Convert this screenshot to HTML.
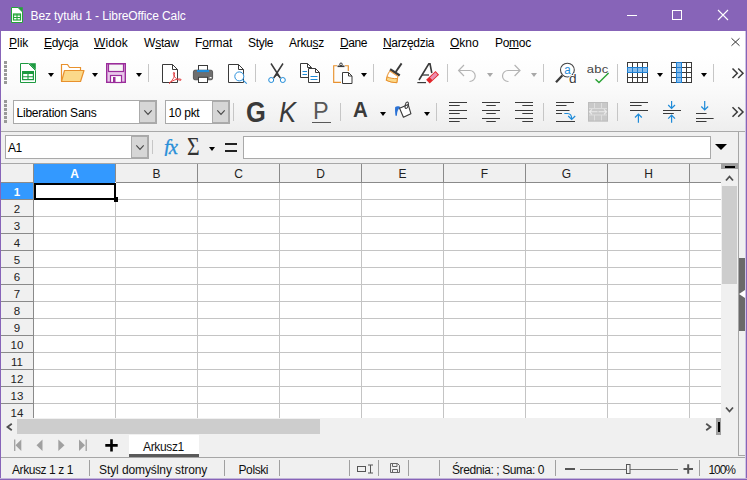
<!DOCTYPE html>
<html lang="pl">
<head>
<meta charset="utf-8">
<title>Bez tytułu 1 - LibreOffice Calc</title>
<style>
html,body{margin:0;padding:0;}
body{width:747px;height:480px;overflow:hidden;position:relative;background:#f0f0f0;font-family:"Liberation Sans",sans-serif;font-size:12px;color:#000;}
#win{position:absolute;left:0;top:0;width:747px;height:480px;background:#f0f0f0;overflow:hidden;}
#win div,#win span,#win svg{position:absolute;}
#title{left:0;top:0;width:747px;height:31px;background:#8764b8;color:#fff;}
#title .t{left:30.5px;top:9px;font-size:12px;line-height:15px;white-space:nowrap;letter-spacing:-0.11px;}
#menu{left:1px;top:31px;width:744px;height:24px;background:#fff;}
#menu span{top:5px;line-height:14px;font-size:12px;white-space:nowrap;color:#000;}
#menu u{text-decoration:underline;text-underline-offset:1px;}
#tb{left:1px;top:55px;width:744px;height:76px;background:linear-gradient(#ffffff 0,#fbfbfb 30px,#f3f3f3 60px,#eeeeee 76px);}
#fbar{left:1px;top:131px;width:744px;height:32px;background:#f0f0f0;border-top:1px solid #a9a9a9;box-sizing:border-box;}
.sep{width:1px;background:#c6c6c6;}
.arr{width:0;height:0;border-left:3.5px solid transparent;border-right:3.5px solid transparent;border-top:4px solid #000;}
.arr.dis{border-top-color:#a8a8a8;}
.grip{width:3px;background:repeating-linear-gradient(#999 0,#999 3px,transparent 3px,transparent 4px);}
.combo{box-sizing:border-box;border:1px solid #a9a9a9;background:#fff;}
.combo .tx{left:3px;top:5px;font-size:12px;line-height:14px;white-space:nowrap;}
.combo .btn{right:0;top:0;width:17px;bottom:0;background:#d6d6d6;border:1px solid #ababab;box-sizing:border-box;}
svg{overflow:visible;}
#grid{left:1px;top:163px;width:720px;height:255px;background:#fff;overflow:hidden;}
#grid .ch{top:1px;height:18px;line-height:20px;text-align:center;font-size:12px;color:#222;background:#f0f0f0;}
#grid .rh{left:0;width:32px;height:16px;line-height:18px;text-align:center;font-size:11.500px;overflow:hidden;color:#222;background:#f0f0f0;}
#stat{left:1px;top:457px;width:744px;height:22px;background:#f0f0f0;border-top:1px solid #a6a6a6;box-sizing:border-box;}
#stat span{top:4.8px;font-size:12px;line-height:14px;white-space:nowrap;color:#111;}
#stat .sep{top:2px;height:16px;background:#a0a0a0;}
</style>
</head>
<body>
<div id="win">
<div id="title">
<svg style="left:10px;top:7px" width="14" height="16" viewBox="0 0 14 16"><path d="M1.500 0.500H8L12.500 5V15.500H1.500Z" fill="#fff" stroke="#23a537" stroke-width="1"/><path d="M8.500 0.500H12.500V4.500Z" fill="#23a537" stroke="#23a537" stroke-width="0.500"/><rect x="3.500" y="7" width="7" height="6" fill="none" stroke="#23a537" stroke-width="1.200"/><path d="M3.500 8H10.500M3.500 10.500H10.500M7 7V13" stroke="#23a537" stroke-width="1.100"/></svg>
<div class="t">Bez tytułu 1 - LibreOffice Calc</div>
<svg style="left:620px;top:0" width="127" height="31" viewBox="0 0 127 31"><path d="M7 15.500H17" stroke="#fff" stroke-width="1"/><rect x="52.500" y="10.500" width="9" height="9" fill="none" stroke="#fff" stroke-width="1"/><path d="M98 10L108 20M108 10L98 20" stroke="#fff" stroke-width="1.100"/></svg>
</div>
<div id="menu">
<span style="left:8px;letter-spacing:0px"><u>P</u>lik</span>
<span style="left:43px;letter-spacing:-0.3px"><u>E</u>dycja</span>
<span style="left:93px;letter-spacing:0.1px"><u>W</u>idok</span>
<span style="left:143px;letter-spacing:-0.2px">W<u>s</u>taw</span>
<span style="left:194px;letter-spacing:-0.15px">F<u>o</u>rmat</span>
<span style="left:247px;letter-spacing:-0.3px">Style</span>
<span style="left:288px;letter-spacing:-0.3px">Arku<u>s</u>z</span>
<span style="left:339px;letter-spacing:-0.4px"><u>D</u>ane</span>
<span style="left:382px;letter-spacing:-0.33px"><u>N</u>arzędzia</span>
<span style="left:449px;letter-spacing:0px"><u>O</u>kno</span>
<span style="left:494px;letter-spacing:-0.3px">Po<u>m</u>oc</span>
<svg style="left:730px;top:7.400px" width="9" height="8" viewBox="0 0 9 8"><path d="M0.500 0.300L8.500 7.700M8.500 0.300L0.500 7.700" stroke="#333" stroke-width="1"/></svg>
</div>
<div id="tb">
<div class="grip" style="left:3px;top:6px;height:23px"></div>
<div class="grip" style="left:3px;top:45px;height:23px"></div>
<div class="sep" style="left:147px;top:9px;height:18px"></div>
<div class="sep" style="left:254px;top:9px;height:18px"></div>
<div class="sep" style="left:372px;top:9px;height:18px"></div>
<div class="sep" style="left:446px;top:9px;height:18px"></div>
<div class="sep" style="left:542px;top:9px;height:18px"></div>
<div class="sep" style="left:616px;top:9px;height:18px"></div>
<div class="sep" style="left:712px;top:9px;height:18px"></div>
<div class="sep" style="left:232px;top:48px;height:18px"></div>
<div class="sep" style="left:339px;top:48px;height:18px"></div>
<div class="sep" style="left:435px;top:48px;height:18px"></div>
<div class="sep" style="left:542px;top:48px;height:18px"></div>
<div class="sep" style="left:616px;top:48px;height:18px"></div>
<div class="arr" style="left:47px;top:18px"></div>
<div class="arr" style="left:91px;top:18px"></div>
<div class="arr" style="left:135px;top:18px"></div>
<div class="arr" style="left:360px;top:18px"></div>
<div class="arr dis" style="left:486px;top:18px"></div>
<div class="arr dis" style="left:530px;top:18px"></div>
<div class="arr" style="left:656px;top:18px"></div>
<div class="arr" style="left:700px;top:18px"></div>
<div class="arr" style="left:379px;top:57px"></div>
<div class="arr" style="left:423px;top:57px"></div>
<svg style="left:15px;top:6px" width="24" height="24" viewBox="16 61 24 24"><path d="M20.500 63.500H28.500L35.500 70.500V82.500H20.500Z" fill="#fff" stroke="#1d9a40"/><path d="M29.500 63.500H35.500V69.500Z" fill="#1d9a40" stroke="#1d9a40" stroke-width="0.600"/><rect x="22.600" y="71.600" width="10.800" height="8" fill="#fff" stroke="#1d9a40" stroke-width="1.200"/><rect x="22.600" y="71.600" width="10.800" height="2.400" fill="#1d9a40"/><path d="M22.600 76.800H33.400M28 73V79.600" stroke="#1d9a40" stroke-width="1.100"/></svg>
<svg style="left:59px;top:6px" width="26" height="24" viewBox="60 61 26 24"><path d="M61.500 81V64.500H67.500L69.500 67.500H80.500V71" fill="#fff" stroke="#e8912d" stroke-width="1.200"/><path d="M61.500 81.500L64.500 70.500H84L80.500 81.500Z" fill="#fbd98a" stroke="#e8912d" stroke-width="1.200" stroke-linejoin="round"/></svg>
<svg style="left:103px;top:6px" width="24" height="24" viewBox="104 61 24 24"><rect x="106.700" y="63.700" width="18.600" height="18.600" fill="#e8c7ea" stroke="#9b2d9b" stroke-width="1.400"/><rect x="108.500" y="64" width="15" height="7.500" fill="#f6f6f6" stroke="#9b2d9b" stroke-width="1.200"/><rect x="110.500" y="75.500" width="11" height="7" fill="#fff" stroke="#9b2d9b" stroke-width="1.200"/><rect x="113" y="77" width="2.500" height="5.500" fill="#9b2d9b"/></svg>
<svg style="left:159px;top:6px" width="24" height="24" viewBox="160 61 24 24"><path d="M162.500 64.500H172.500L177.500 69.500V82.500H162.500Z" fill="#fff" stroke="#3a3a3a"/><path d="M172.500 64.500V69.500H177.500" fill="none" stroke="#3a3a3a"/><path d="M169 83.500C172 81 175 77 174.500 73C174 71.500 173 72.500 173.500 74.500C174.500 78 178 80.500 181 80.200C182 79.500 180 78.500 177 79.200C174 80 171 81.500 169 83.500Z" fill="none" stroke="#e0393d" stroke-width="0.950" stroke-linejoin="round"/></svg>
<svg style="left:190px;top:6px" width="24" height="24" viewBox="191 61 24 24"><rect x="193.400" y="70.200" width="19.200" height="9.600" rx="1.600" fill="#6e6e6e" stroke="#444" stroke-width="0.800"/><rect x="198.500" y="65.500" width="9" height="4.800" fill="#fff" stroke="#3a3a3a"/><rect x="197" y="69.900" width="12" height="2.200" fill="#1e8bd9"/><rect x="198.500" y="77.300" width="9" height="5.200" fill="#fff" stroke="#3a3a3a"/><rect x="209.600" y="77" width="2" height="1.300" fill="#fff"/></svg>
<svg style="left:225px;top:6px" width="24" height="24" viewBox="226 61 24 24"><path d="M228.500 64.500H238.500L243.500 69.500V82.500H228.500Z" fill="#fff" stroke="#3a3a3a"/><path d="M238.500 64.500V69.500H243.500" fill="none" stroke="#3a3a3a"/><circle cx="239.300" cy="76.400" r="4.500" fill="#fff" stroke="#2a90dc" stroke-width="1"/><path d="M242.500 79.600L246.800 83.600" stroke="#2a90dc" stroke-width="1.100"/></svg>
<svg style="left:264px;top:6px" width="24" height="24" viewBox="265 61 24 24"><path d="M271 63.500L280.300 78M283 63.500L273.700 78" stroke="#3a3a3a" stroke-width="1.500" fill="none"/><path d="M275.500 74.500L277 72L278.500 74.500L280.500 78.200L277 75.500L273.500 78.200Z" fill="#3a3a3a"/><circle cx="271.200" cy="80" r="2.500" fill="#fff" stroke="#1e8bd9" stroke-width="1"/><circle cx="282.800" cy="80" r="2.500" fill="#fff" stroke="#1e8bd9" stroke-width="1"/></svg>
<svg style="left:297px;top:6px" width="24" height="24" viewBox="298 61 24 24"><path d="M300.500 63.500H307.500L311.500 67.500V77.500H300.500Z" fill="#fff" stroke="#3a3a3a"/><path d="M307.500 63.500V67.500H311.500" fill="none" stroke="#3a3a3a"/><path d="M302.500 71.500H307M302.500 74.500H307" stroke="#1e8bd9" stroke-width="1.200"/><path d="M308.500 68.500H315.500L319.500 72.500V82.500H308.500Z" fill="#fff" stroke="#3a3a3a"/><path d="M315.500 68.500V72.500H319.500" fill="none" stroke="#3a3a3a"/><path d="M310.500 76.500H317.500M310.500 79.500H317.500" stroke="#1e8bd9" stroke-width="1.200"/></svg>
<svg style="left:330px;top:6px" width="24" height="24" viewBox="331 61 24 24"><path d="M337 65.700H333.700V82.300H341M345 65.700H348.300V71" fill="none" stroke="#e8912d" stroke-width="1.150"/><path d="M337.500 66.300H344.500" stroke="#3a3a3a" stroke-width="1.600"/><circle cx="341" cy="64.300" r="1.300" fill="none" stroke="#3a3a3a" stroke-width="1"/><path d="M342.500 72.500H348.500L352 76V83.500H342.500Z" fill="#fff" stroke="#3a3a3a"/><path d="M348.500 72.500V76H352" fill="none" stroke="#3a3a3a"/></svg>
<svg style="left:381px;top:6px" width="24" height="24" viewBox="382 61 24 24"><path d="M401.600 63.400L395.700 72" stroke="#3a3a3a" stroke-width="1.900"/><path d="M390 69.300L399.700 75.500" stroke="#3a3a3a" stroke-width="2.600"/><path d="M390 71L388.500 73C387 75.500 386.500 78 386.300 80.200C389.500 81.800 393 82.600 396.800 82.600L397.800 76.300Z" fill="#fff" stroke="#eda04a" stroke-width="1.100" stroke-linejoin="round"/><path d="M387.200 76.800C390 78.200 393.500 78.800 397.400 78.600L396.800 82.600C393 82.600 389.500 81.800 386.300 80.200Z" fill="#fbd98a" stroke="#e8912d" stroke-width="1"/></svg>
<svg style="left:415px;top:6px" width="24" height="24" viewBox="416 61 24 24"><path d="M419 80L428.800 63.800H430L431.800 73" fill="none" stroke="#3a3a3a" stroke-width="1.600"/><path d="M422 75H429" stroke="#3a3a3a" stroke-width="1.300"/><path d="M417.300 82.600H426" stroke="#3a3a3a" stroke-width="1.200"/><g transform="rotate(-43 432.600 77.200)"><rect x="426.200" y="74.600" width="12.800" height="5.200" fill="#e2262a"/><rect x="430.500" y="75.500" width="7.500" height="3.400" fill="#ec8fb0"/></g></svg>
<svg style="left:454px;top:6px" width="24" height="24" viewBox="455 61 24 24"><path d="M464 65L458.600 70.500L464 76M458.600 70.500H469.700A5.500 5.500 0 0 1 469.700 81.500H469.500" fill="none" stroke="#b4b4b4" stroke-width="1.200"/></svg>
<svg style="left:498px;top:6px" width="24" height="24" viewBox="499 61 24 24"><path d="M514.600 65L520 70.500L514.600 76M520 70.500H508A5.500 5.500 0 0 0 508 81.500H508.500" fill="none" stroke="#b4b4b4" stroke-width="1.200"/></svg>
<svg style="left:553px;top:6px" width="24" height="24" viewBox="554 61 24 24"><circle cx="567.400" cy="70.100" r="6.900" fill="#fff" stroke="#444" stroke-width="1.100"/><path d="M562.300 75.500L556 82.200" stroke="#3a3a3a" stroke-width="2.200"/><text transform="translate(567.600 73.700) scale(0.860 1)" font-family="Liberation Sans,sans-serif" font-size="13.500" fill="#1e8bd9" text-anchor="middle">a</text><text x="569" y="82.700" font-family="Liberation Sans,sans-serif" font-size="13.600" fill="#3a3a3a" stroke="#fff" stroke-width="2" paint-order="stroke">d</text></svg>
<svg style="left:585px;top:6px" width="24" height="24" viewBox="586 61 24 24"><text transform="translate(597.600 72.700) scale(1 0.860)" font-family="Liberation Sans,sans-serif" font-size="13" fill="#444" text-anchor="middle" letter-spacing="0.200">abc</text><path d="M595.500 79.200L599 82.600L608.600 73" fill="none" stroke="#2ba336" stroke-width="1.400"/></svg>
<svg style="left:626px;top:7px" width="21" height="21" viewBox="627 62 21 21"><rect x="627" y="62" width="21" height="21" fill="#fff"/><path d="M627.5 62V83M627 62.5H648M632.5 62V83M627 67.5H648M637.5 62V83M627 72.5H648M642.5 62V83M627 77.5H648M647.5 62V83M627 82.5H648" stroke="#3a3a3a" stroke-width="1" fill="none"/><rect x="627" y="67" width="21" height="6" fill="#86bcec"/><path d="M627 67.5H648M627 72.5H648M627.5 67V73M632.5 67V73M637.5 67V73M642.5 67V73M647.5 67V73" stroke="#1e7fd2" stroke-width="1" fill="none"/></svg>
<svg style="left:670px;top:7px" width="21" height="21" viewBox="671 62 21 21"><rect x="671" y="62" width="21" height="21" fill="#fff"/><path d="M671.5 62V83M671 62.5H692M676.5 62V83M671 67.5H692M681.5 62V83M671 72.5H692M686.5 62V83M671 77.5H692M691.5 62V83M671 82.5H692" stroke="#3a3a3a" stroke-width="1" fill="none"/><rect x="676" y="62" width="6" height="21" fill="#86bcec"/><path d="M676.5 62V83M681.5 62V83M676 62.5H682M676 67.5H682M676 72.5H682M676 77.5H682M676 82.5H682" stroke="#1e7fd2" stroke-width="1" fill="none"/></svg>
<svg style="left:730px;top:11px" width="14" height="14" viewBox="731 66 14 14"><path d="M732.500 68.500L737.300 73.200L732.500 78M738.200 68.500L743 73.200L738.200 78" fill="none" stroke="#3a3a3a" stroke-width="1.500"/></svg>
<svg style="left:730px;top:50px" width="14" height="14" viewBox="731 105 14 14"><path d="M732.500 107.300L737.300 112L732.500 116.800M738.200 107.300L743 112L738.200 116.800" fill="none" stroke="#3a3a3a" stroke-width="1.500"/></svg>
<div class="combo" style="left:12px;top:45px;width:144px;height:24px"><span class="tx" style="letter-spacing:-0.220px;left:2.500px">Liberation Sans</span><div class="btn"><svg style="left:3.500px;top:7.500px" width="8" height="5" viewBox="0 0 8 5"><path d="M0.300 0.300L4 4.300L7.700 0.300" fill="none" stroke="#484848" stroke-width="1.150"/></svg></div></div>
<div class="combo" style="left:164px;top:45px;width:65px;height:24px"><span class="tx" style="letter-spacing:-0.300px;left:2.500px">10 pkt</span><div class="btn"><svg style="left:3.500px;top:7.500px" width="8" height="5" viewBox="0 0 8 5"><path d="M0.300 0.300L4 4.300L7.700 0.300" fill="none" stroke="#484848" stroke-width="1.150"/></svg></div></div>
<span style="left:244.6px;top:40.5px;font-size:28.800px;line-height:33px;font-weight:bold;color:#3a3a3a;transform:scaleX(0.885);transform-origin:0 0">G</span>
<span style="left:277.9px;top:40.7px;font-size:28.700px;line-height:33px;font-style:italic;color:#3a3a3a;transform:scaleX(0.895);transform-origin:0 0">K</span>
<span style="left:312px;top:43px;font-size:23.500px;line-height:26px;color:#585858">P</span>
<div style="left:311px;top:66.5px;width:19px;height:1.200px;background:#585858"></div>
<span style="left:351.8px;top:43.2px;font-size:22.400px;line-height:24px;font-weight:bold;color:#3a3a3a;transform:scaleX(0.915);transform-origin:0 0">A</span>
<svg style="left:391px;top:45px" width="24" height="24" viewBox="392 100 24 24"><path d="M395.200 107C397 105.900 399.500 106.300 400.800 107.500C398.600 108.200 397.200 110.500 396.900 115.800L395.500 115.800C395 112 394.900 109 395.200 107Z" fill="#2a72d6"/><path d="M399.600 108.200L408.200 104.600L410.900 113.700L403.400 117.300Z" fill="#fff" stroke="#3a3a3a" stroke-width="1.100" stroke-linejoin="round"/><ellipse cx="406.700" cy="105.200" rx="1.500" ry="3.300" transform="rotate(14 406.700 105.200)" fill="none" stroke="#3a3a3a" stroke-width="1"/></svg>
<svg style="left:445px;top:45px" width="24" height="24" viewBox="446 100 24 24"><path d="M449 102.5H467M449 105.5H459.7M449 110.5H467M449 113.5H459.7M449 118.5H467M449 121.5H459.7" stroke="#3a3a3a" stroke-width="1.2" fill="none"/></svg>
<svg style="left:478px;top:45px" width="24" height="24" viewBox="479 100 24 24"><path d="M482 102.5H500M486.3 105.5H495.8M482 110.5H500M486.3 113.5H495.8M482 118.5H500M486.3 121.5H495.8" stroke="#3a3a3a" stroke-width="1.2" fill="none"/></svg>
<svg style="left:511px;top:45px" width="24" height="24" viewBox="512 100 24 24"><path d="M515 102.5H533M522.3 105.5H533M515 110.5H533M522.3 113.5H533M515 118.5H533M522.3 121.5H533" stroke="#3a3a3a" stroke-width="1.2" fill="none"/></svg>
<svg style="left:552px;top:45px" width="24" height="24" viewBox="553 100 24 24"><path d="M556 102.5H574M556 105.5H566.5M556 110.5H569.5M556 113.5H562M556 121.5H575" stroke="#3a3a3a" stroke-width="1.2" fill="none"/><path d="M564.300 113.500H567.500C570.500 113.500 571.700 115.500 571.700 119M568.200 116L571.700 119.500L575.200 116" fill="none" stroke="#1e8bd9" stroke-width="1.200"/></svg>
<svg style="left:587px;top:47px" width="20" height="20" viewBox="588 102 20 20"><rect x="588" y="102" width="20" height="19.500" fill="#c9c9c9"/><path d="M588 108.500H608M588 115H608M594.500 102V108.500M601.500 102V108.500M594.500 115V121.500M601.500 115V121.500" stroke="#dedede" stroke-width="1"/><rect x="588.500" y="102.500" width="19" height="18.500" fill="none" stroke="#bdbdbd" stroke-width="1"/><path d="M589.500 111.800H597.500M598.500 111.800H606.500M592 109.300L589.500 111.800L592 114.300M604 109.300L606.500 111.800L604 114.300" fill="none" stroke="#ececec" stroke-width="1.100"/></svg>
<svg style="left:626px;top:45px" width="24" height="24" viewBox="627 100 24 24"><path d="M630 102.5H648M630 105.5H641.6M630 110.5H648" stroke="#3a3a3a" stroke-width="1.2" fill="none"/><path d="M638.400 122.700V114M635 117.500L638.400 114L641.800 117.500" fill="none" stroke="#1e8bd9" stroke-width="1.200"/></svg>
<svg style="left:659px;top:45px" width="24" height="24" viewBox="660 100 24 24"><path d="M663 110.5H681M663 113.5H673.8" stroke="#3a3a3a" stroke-width="1.2" fill="none"/><path d="M671.600 101V108.500M668.200 105L671.600 108.500L675 105M671.600 122.700V115.200M668.200 118.700L671.600 115.200L675 118.700" fill="none" stroke="#1e8bd9" stroke-width="1.200"/></svg>
<svg style="left:692px;top:45px" width="24" height="24" viewBox="693 100 24 24"><path d="M696 113.5H706.5M696 118.5H713.6M696 121.5H706.5" stroke="#3a3a3a" stroke-width="1.2" fill="none"/><path d="M704.700 101V110M701.300 106.500L704.700 110L708.100 106.500" fill="none" stroke="#1e8bd9" stroke-width="1.200"/></svg>
</div>
<div id="fbar">
<div class="combo" style="left:4px;top:3px;width:144px;height:24px"><span class="tx" style="left:2px;letter-spacing:-0.500px">A1</span><div class="btn"><svg style="left:3.500px;top:7.500px" width="8" height="5" viewBox="0 0 8 5"><path d="M0.300 0.300L4 4.300L7.700 0.300" fill="none" stroke="#484848" stroke-width="1.150"/></svg></div></div>
<div class="sep" style="left:151px;top:8px;height:14px"></div>
<div style="left:159px;top:2px;width:22px;height:21.800px;overflow:hidden"><span style="left:3.500px;top:0.500px;font-family:'Liberation Serif',serif;font-style:italic;font-size:22px;line-height:24px;color:#2a8fd8;letter-spacing:-1px;-webkit-text-stroke:0.300px #2a8fd8;transform:scaleX(0.940);transform-origin:0 0">fx</span></div>
<span style="left:185.5px;top:1px;font-family:'Liberation Serif',serif;font-size:24.200px;line-height:28px;color:#333;transform:scaleX(0.900);transform-origin:0 0">Σ</span>
<div class="arr" style="left:208px;top:15px"></div>
<div style="left:224px;top:11px;width:12px;height:2px;background:#222"></div><div style="left:224px;top:17.5px;width:12px;height:2px;background:#222"></div>
<div class="combo" style="left:242px;top:4px;width:468px;height:23px"></div>
<div style="left:714px;top:12px;width:0;height:0;border-left:6px solid transparent;border-right:6px solid transparent;border-top:6px solid #000"></div>
</div>
<div id="grid">
<div style="left:0;top:0;width:720px;height:1px;background:#a8a8a8"></div>
<div style="left:0;top:1px;width:720px;height:18px;background:#f0f0f0"></div>
<div style="left:0;top:19px;width:32px;height:236px;background:#f0f0f0"></div>
<div class="ch" style="left:33px;width:81px;background:#3399ff;color:#fff;font-weight:bold;height:19px">A</div>
<div style="left:114px;top:1px;width:1px;height:18px;background:#8a8a8a"></div>
<div style="left:114px;top:20px;width:1px;height:236px;background:#c4c4c4"></div>
<div class="ch" style="left:115px;width:81px">B</div>
<div style="left:196px;top:1px;width:1px;height:18px;background:#8a8a8a"></div>
<div style="left:196px;top:20px;width:1px;height:236px;background:#c4c4c4"></div>
<div class="ch" style="left:197px;width:81px">C</div>
<div style="left:278px;top:1px;width:1px;height:18px;background:#8a8a8a"></div>
<div style="left:278px;top:20px;width:1px;height:236px;background:#c4c4c4"></div>
<div class="ch" style="left:279px;width:81px">D</div>
<div style="left:360px;top:1px;width:1px;height:18px;background:#8a8a8a"></div>
<div style="left:360px;top:20px;width:1px;height:236px;background:#c4c4c4"></div>
<div class="ch" style="left:361px;width:81px">E</div>
<div style="left:442px;top:1px;width:1px;height:18px;background:#8a8a8a"></div>
<div style="left:442px;top:20px;width:1px;height:236px;background:#c4c4c4"></div>
<div class="ch" style="left:443px;width:81px">F</div>
<div style="left:524px;top:1px;width:1px;height:18px;background:#8a8a8a"></div>
<div style="left:524px;top:20px;width:1px;height:236px;background:#c4c4c4"></div>
<div class="ch" style="left:525px;width:81px">G</div>
<div style="left:606px;top:1px;width:1px;height:18px;background:#8a8a8a"></div>
<div style="left:606px;top:20px;width:1px;height:236px;background:#c4c4c4"></div>
<div class="ch" style="left:607px;width:81px">H</div>
<div style="left:688px;top:1px;width:1px;height:18px;background:#8a8a8a"></div>
<div style="left:688px;top:20px;width:1px;height:236px;background:#c4c4c4"></div>
<div class="ch" style="left:689px;width:40px"></div>
<div style="left:770px;top:1px;width:1px;height:18px;background:#8a8a8a"></div>
<div style="left:770px;top:20px;width:1px;height:236px;background:#c4c4c4"></div>
<div style="left:115px;top:19px;width:605px;height:1px;background:#8a8a8a"></div>
<div style="left:0;top:19px;width:33px;height:1px;background:#8a8a8a"></div>
<div style="left:32px;top:1px;width:1px;height:254px;background:#8a8a8a"></div>
<div class="rh" style="top:20px;background:#3399ff;color:#fff;font-weight:bold;height:17px">1</div>
<div style="left:0;top:36px;width:32px;height:1px;background:#8a8a8a"></div>
<div style="left:33px;top:36px;width:687px;height:1px;background:#c4c4c4"></div>
<div class="rh" style="top:37px">2</div>
<div style="left:0;top:53px;width:32px;height:1px;background:#8a8a8a"></div>
<div style="left:33px;top:53px;width:687px;height:1px;background:#c4c4c4"></div>
<div class="rh" style="top:54px">3</div>
<div style="left:0;top:70px;width:32px;height:1px;background:#8a8a8a"></div>
<div style="left:33px;top:70px;width:687px;height:1px;background:#c4c4c4"></div>
<div class="rh" style="top:71px">4</div>
<div style="left:0;top:87px;width:32px;height:1px;background:#8a8a8a"></div>
<div style="left:33px;top:87px;width:687px;height:1px;background:#c4c4c4"></div>
<div class="rh" style="top:88px">5</div>
<div style="left:0;top:104px;width:32px;height:1px;background:#8a8a8a"></div>
<div style="left:33px;top:104px;width:687px;height:1px;background:#c4c4c4"></div>
<div class="rh" style="top:105px">6</div>
<div style="left:0;top:121px;width:32px;height:1px;background:#8a8a8a"></div>
<div style="left:33px;top:121px;width:687px;height:1px;background:#c4c4c4"></div>
<div class="rh" style="top:122px">7</div>
<div style="left:0;top:138px;width:32px;height:1px;background:#8a8a8a"></div>
<div style="left:33px;top:138px;width:687px;height:1px;background:#c4c4c4"></div>
<div class="rh" style="top:139px">8</div>
<div style="left:0;top:155px;width:32px;height:1px;background:#8a8a8a"></div>
<div style="left:33px;top:155px;width:687px;height:1px;background:#c4c4c4"></div>
<div class="rh" style="top:156px">9</div>
<div style="left:0;top:172px;width:32px;height:1px;background:#8a8a8a"></div>
<div style="left:33px;top:172px;width:687px;height:1px;background:#c4c4c4"></div>
<div class="rh" style="top:173px">10</div>
<div style="left:0;top:189px;width:32px;height:1px;background:#8a8a8a"></div>
<div style="left:33px;top:189px;width:687px;height:1px;background:#c4c4c4"></div>
<div class="rh" style="top:190px">11</div>
<div style="left:0;top:206px;width:32px;height:1px;background:#8a8a8a"></div>
<div style="left:33px;top:206px;width:687px;height:1px;background:#c4c4c4"></div>
<div class="rh" style="top:207px">12</div>
<div style="left:0;top:223px;width:32px;height:1px;background:#8a8a8a"></div>
<div style="left:33px;top:223px;width:687px;height:1px;background:#c4c4c4"></div>
<div class="rh" style="top:224px">13</div>
<div style="left:0;top:240px;width:32px;height:1px;background:#8a8a8a"></div>
<div style="left:33px;top:240px;width:687px;height:1px;background:#c4c4c4"></div>
<div class="rh" style="top:241px">14</div>
<div style="left:0;top:257px;width:32px;height:1px;background:#8a8a8a"></div>
<div style="left:33px;top:257px;width:687px;height:1px;background:#c4c4c4"></div>
<div style="left:33px;top:20px;width:82px;height:17px;border:2px solid #000;box-sizing:border-box;background:#fff"></div>
<div style="left:112.500px;top:34px;width:4.500px;height:4.500px;background:#000"></div>
</div>
<div style="left:721px;top:163px;width:17px;height:255px;background:#f0f0f0"></div>
<div style="left:721px;top:163px;width:17px;height:6px;background:#a0a0a0"></div><div style="left:725px;top:165.500px;width:9.500px;height:2.500px;background:#000"></div>
<svg style="left:725px;top:174px" width="9" height="8" viewBox="0 0 9 8"><path d="M1 6.500L4.500 2.500L8 6.500" fill="none" stroke="#505050" stroke-width="1.800"/></svg>
<div style="left:722px;top:186px;width:15px;height:98px;background:#cdcdcd"></div>
<svg style="left:725px;top:406px" width="9" height="8" viewBox="0 0 9 8"><path d="M1 1.500L4.500 5.500L8 1.500" fill="none" stroke="#505050" stroke-width="1.800"/></svg>
<div style="left:738px;top:132px;width:1px;height:324px;background:#a6a6a6"></div>
<div style="left:738px;top:455px;width:7px;height:1px;background:#a6a6a6"></div>
<div style="left:739px;top:258px;width:6px;height:73px;background:#6a6a6a"></div>
<div style="left:739px;top:290px;width:0;height:0;border-top:4.500px solid transparent;border-bottom:4.500px solid transparent;border-right:6px solid #fff"></div>
<div style="left:1px;top:418px;width:737px;height:17px;background:#f0f0f0"></div>
<svg style="left:6px;top:423px" width="7" height="8" viewBox="0 0 7 8"><path d="M5.800 0.800L1.500 4L5.800 7.200" fill="none" stroke="#505050" stroke-width="1.800"/></svg>
<div style="left:17px;top:419px;width:303px;height:15px;background:#cdcdcd"></div>
<svg style="left:705px;top:423px" width="7" height="8" viewBox="0 0 7 8"><path d="M1.200 0.800L5.500 4L1.200 7.200" fill="none" stroke="#505050" stroke-width="1.800"/></svg>
<div style="left:716px;top:418px;width:5px;height:17px;background:#a0a0a0"></div><div style="left:717.800px;top:421.500px;width:2px;height:10px;background:#000"></div>
<svg style="left:1px;top:435px" width="130" height="22" viewBox="1 435 130 22"><path d="M14.700 439.500V451" stroke="#a0a0a0" stroke-width="1.300"/><path d="M21.300 439.500V451L15.500 445.200Z" fill="#a0a0a0"/><path d="M42.500 439.500V451L36.500 445.200Z" fill="#a0a0a0"/><path d="M58.300 439.500V451L64.500 445.200Z" fill="#a0a0a0"/><path d="M79 439.500V451L85 445.200Z" fill="#a0a0a0"/><path d="M86.200 439.500V451" stroke="#a0a0a0" stroke-width="1.300"/><path d="M105.300 445.400H117.700M111.500 439.200V451.600" stroke="#000" stroke-width="2.600"/></svg>
<div style="left:129px;top:435px;width:70px;height:19px;background:#fff"></div><div style="left:129px;top:454px;width:70px;height:3px;background:#5a5a5a"></div>
<span style="left:143px;top:439.5px;font-size:12px;line-height:14px;letter-spacing:-0.350px;color:#111">Arkusz1</span>
<div id="stat">
<div class="sep" style="left:88px"></div>
<div class="sep" style="left:223px"></div>
<div class="sep" style="left:278px"></div>
<div class="sep" style="left:348px"></div>
<div class="sep" style="left:377px"></div>
<div class="sep" style="left:407px"></div>
<div class="sep" style="left:438px"></div>
<div class="sep" style="left:554px"></div>
<div class="sep" style="left:698px"></div>
<span style="left:11px;letter-spacing:-0.420px">Arkusz 1 z 1</span>
<span style="left:98px;letter-spacing:-0.090px">Styl domyślny strony</span>
<span style="left:237.5px;letter-spacing:-0.400px">Polski</span>
<span style="left:451px;letter-spacing:-0.410px">Średnia: ; Suma: 0</span>
<span style="left:707.5px;letter-spacing:-1.050px">100%</span>
<svg style="left:0;top:0" width="744" height="21" viewBox="1 458 744 21"><rect x="357.500" y="466.500" width="8" height="5" fill="none" stroke="#555" stroke-width="1"/><path d="M368 465H373M368 473H373M370.500 465V473" stroke="#555" stroke-width="1" fill="none"/><path d="M390.500 463.500H397.500L399.500 465.500V472.500H390.500Z" fill="none" stroke="#666" stroke-width="1"/><path d="M392.500 463.500V466.500H397V463.500M392.500 472.500V469.500H397.500V472.500" fill="none" stroke="#666" stroke-width="1"/><path d="M565 469H575M683.500 469H693M688.200 464.300V473.700" stroke="#555" stroke-width="2"/><path d="M580 469.500H678" stroke="#777" stroke-width="1"/><rect x="626.500" y="464.500" width="3.500" height="9" fill="#f0f0f0" stroke="#555" stroke-width="1"/></svg>
</div>
<div style="left:0;top:31px;width:1px;height:449px;background:#8764b8"></div>
<div style="left:745px;top:31px;width:1px;height:449px;background:#cfc4e2"></div><div style="left:746px;top:31px;width:1px;height:449px;background:#8764b8"></div>
<div style="left:0;top:478px;width:747px;height:1px;background:#c3b5d9"></div>
<div style="left:0;top:479px;width:747px;height:1px;background:#8764b8"></div>
</div>
</body>
</html>
